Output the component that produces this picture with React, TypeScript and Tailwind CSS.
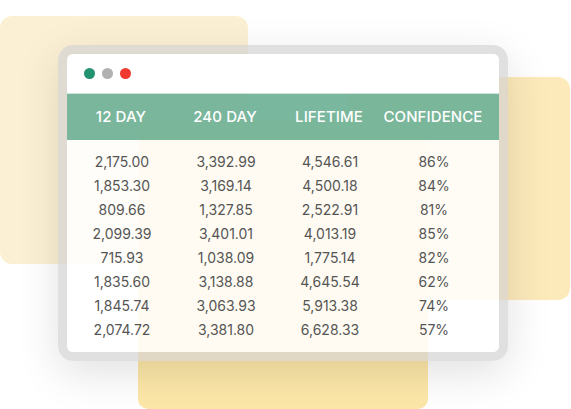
const headers = ['12 DAY', '240 DAY', 'LIFETIME', 'CONFIDENCE'];

const rows = [
    ['2,175.00', '3,392.99', '4,546.61', '86%'],
    ['1,853.30', '3,169.14', '4,500.18', '84%'],
    ['809.66', '1,327.85', '2,522.91', '81%'],
    ['2,099.39', '3,401.01', '4,013.19', '85%'],
    ['715.93', '1,038.09', '1,775.14', '82%'],
    ['1,835.60', '3,138.88', '4,645.54', '62%'],
    ['1,845.74', '3,063.93', '5,913.38', '74%'],
    ['2,074.72', '3,381.80', '6,628.33', '57%'],
];

export default function App() {
    return (
        <div className="relative w-[571px] h-[409px] overflow-hidden bg-white font-['Inter','Liberation_Sans',sans-serif]">
            {/* decorative cards behind the window */}
            <div className="absolute left-0 top-[16px] w-[248px] h-[248px] rounded-[12px] bg-[#fcf0d4]" />
            <div className="absolute left-[347px] top-[77px] w-[223px] h-[223px] rounded-[12px] bg-[#fdeabb]" />
            <div className="absolute left-[138px] top-[120px] w-[290px] h-[289px] rounded-[10px] bg-[#fde7a8]" />

            <div className="relative z-10 ml-[58px] mt-[45px] w-[450px] h-[316px] rounded-[15px] border-[9px] border-[rgba(210,210,210,0.68)] shadow-[0_12px_44px_rgba(0,0,0,0.12)]">
                <div className="h-full rounded-[6px] overflow-hidden flex flex-col">
                    <div className="h-[40px] shrink-0 bg-white border-b border-[#cfe5dc] flex items-center gap-[7px] pl-[17px]">
                        <span className="w-[11px] h-[11px] rounded-full bg-[#229270]" />
                        <span className="w-[11px] h-[11px] rounded-full bg-[#b1b1b1]" />
                        <span className="w-[11px] h-[11px] rounded-full bg-[#f03a2f]" />
                    </div>
                    <div className="h-[46px] shrink-0 bg-[rgba(112,178,152,0.93)] grid grid-cols-[104px_104px_104px_104px] pl-[2px] items-center">
                        {headers.map((h) => (
                            <div key={h} className="text-center text-white text-[15px] font-medium tracking-[0.1px]">
                                {h}
                            </div>
                        ))}
                    </div>
                    <div className="flex-1 bg-white/85 pt-[9px] pl-[3px]">
                        {rows.map((r, i) => (
                            <div key={i} className="grid grid-cols-[104px_104px_104px_104px] h-[24px] items-center">
                                {r.map((v, j) => (
                                    <div key={j} className="text-center text-[14px] text-[#555555]">
                                        {v}
                                    </div>
                                ))}
                            </div>
                        ))}
                    </div>
                </div>
            </div>
        </div>
    );
}
